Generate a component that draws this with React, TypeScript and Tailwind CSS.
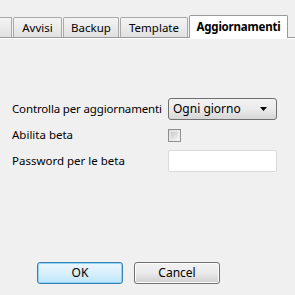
import React from 'react';

const font = { fontFamily: '"Segoe UI", "Noto Sans", "DejaVu Sans", sans-serif' };

const Tab: React.FC<{ label: string; width: string; active?: boolean; partial?: boolean }> = ({
  label,
  width,
  active,
  partial,
}) => {
  if (active) {
    return (
      <div
        className={`${width} h-[23px] -mb-px flex items-center justify-center bg-white border border-b-0 border-[#9a9a9a] rounded-t-[2px] text-[11.5px] tracking-[-0.2px] font-bold text-black whitespace-nowrap`}
      >
        {label}
      </div>
    );
  }
  return (
    <div
      className={`${width} h-[20px] flex items-center justify-center bg-gradient-to-b from-[#f4f4f4] to-[#e1e1e1] border border-b-0 border-[#a9a9a9] ${partial ? 'border-l-0' : 'rounded-t-[2px]'} text-[11.5px] text-black whitespace-nowrap`}
    >
      {label}
    </div>
  );
};

export default function App() {
  return (
    <div className="w-[295px] h-[295px] bg-[#f0f0f0] overflow-hidden flex flex-col" style={font}>
      {/* Tab strip */}
      <div className="h-[38px] pt-[15px] flex items-end gap-px border-b border-[#9a9a9a] shadow-[0_1px_0_#ffffff]">
        <Tab label="" width="w-[12px]" partial />
        <Tab label="Avvisi" width="w-[49px]" />
        <Tab label="Backup" width="w-[56px]" />
        <Tab label="Template" width="w-[68px]" />
        <Tab label="Aggiornamenti" width="w-[99px]" active />
      </div>

      {/* Form */}
      <div className="mt-[60px] pl-[12px] grid grid-cols-[156px_109px] gap-y-[4px] text-[11.5px] text-black whitespace-nowrap">
        <div className="h-[22px] flex items-center tracking-[-0.15px]">Controlla per aggiornamenti</div>
        <div className="h-[22px] flex items-center justify-between pl-[4px] pr-[8px] border border-[#707070] rounded-[3px] bg-gradient-to-b from-[#f2f2f2] via-[#ebebeb] to-[#d6d6d6]">
          <span className="text-[12px]">Ogni giorno</span>
          <svg width="8" height="5" viewBox="0 0 8 5">
            <path d="M0 0 H7 L3.5 4 Z" fill="#000" />
          </svg>
        </div>

        <div className="h-[22px] flex items-center">Abilita beta</div>
        <div className="h-[22px] flex items-center">
          <div className="w-[13px] h-[13px] border border-[#8e8f8f] bg-gradient-to-br from-[#dcdcdc] to-[#f6f6f6] p-[2px]">
            <div className="w-full h-full bg-gradient-to-br from-[#cbcbcb] to-[#f0f0f0]" />
          </div>
        </div>

        <div className="h-[22px] flex items-center">Password per le beta</div>
        <div className="h-[22px] bg-white border border-[#dadada] rounded-[2px]" />
      </div>

      {/* Buttons */}
      <div className="mt-[90px] pl-[37px] flex gap-[11px] text-[12px] text-black">
        <button className="w-[86px] h-[22px] rounded-[3px] border border-[#3c7fb1] bg-gradient-to-b from-[#eaf6fd] via-[#d9f0fc] to-[#bee6fd] shadow-[inset_0_0_0_1px_#8fd4f8]">
          OK
        </button>
        <button className="w-[86px] h-[22px] rounded-[3px] border border-[#707070] bg-gradient-to-b from-[#f2f2f2] via-[#ebebeb] to-[#cfcfcf] shadow-[inset_0_0_0_1px_#fcfcfc]">
          Cancel
        </button>
      </div>
    </div>
  );
}
